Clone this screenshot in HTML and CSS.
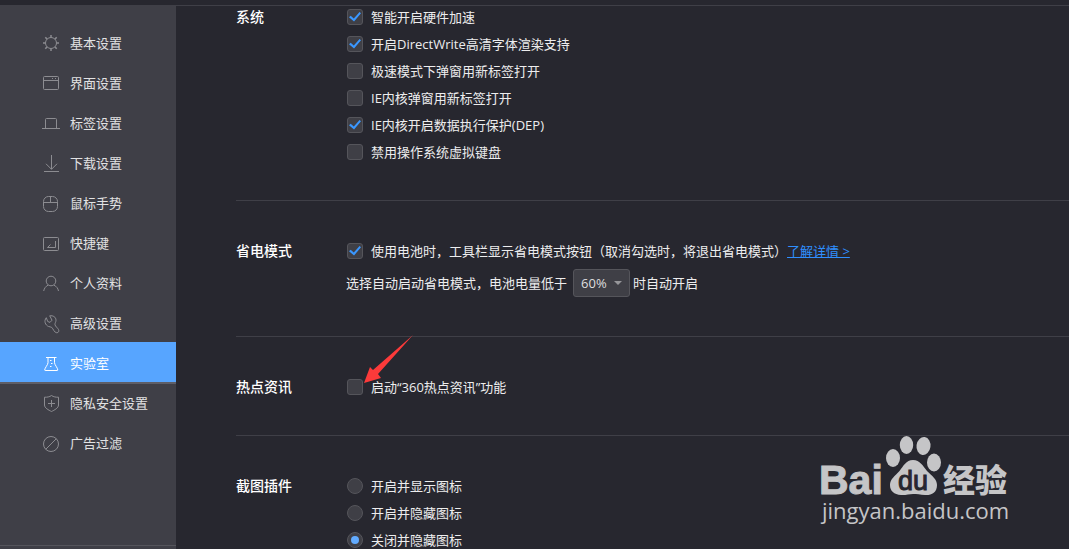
FILE: index.html
```html
<!DOCTYPE html>
<html lang="zh-CN">
<head>
<meta charset="utf-8">
<title>实验室</title>
<link rel="stylesheet" href="styles.css">
</head>
<body>
<div class="app">
  <nav class="sidebar">
    <div class="menu">
      <a class="item" href="#basic"><svg class="icon" viewBox="0 0 18 18"><circle cx="9" cy="9" r="5.5"/><path d="M9 1v2.500M9 14.500v2.500M1 9h2.500M14.500 9H17M3.300 3.300l1.800 1.800M12.900 12.900l1.800 1.800M3.300 14.700l1.800-1.800M12.900 5.100l1.800-1.800" stroke-width="1.500"/></svg>基本设置</a>
      <a class="item" href="#ui"><svg class="icon" viewBox="0 0 18 18"><rect x="1.500" y="2.500" width="15" height="13" rx="1"/><path d="M1.500 6.500h15M10 4.500h1M13 4.500h1"/></svg>界面设置</a>
      <a class="item" href="#tabs"><svg class="icon" viewBox="0 0 18 18"><path d="M0 14.500h18M3.500 14.500v-9a1 1 0 0 1 1-1h9a1 1 0 0 1 1 1v9"/></svg>标签设置</a>
      <a class="item" href="#download"><svg class="icon" viewBox="0 0 18 18"><path d="M9.500 1v14.300M4 9.800l5.500 5.500 5.500-5.500M2 17.500h15"/></svg>下载设置</a>
      <a class="item" href="#mouse"><svg class="icon" viewBox="0 0 18 18"><rect x="1.500" y="2.500" width="14" height="15" rx="5"/><path d="M1.500 8.500h14M8.500 2.500v6"/></svg>鼠标手势</a>
      <a class="item" href="#keys"><svg class="icon" viewBox="0 0 18 18"><rect x="1.500" y="3.500" width="15" height="13" rx="1"/><path d="M13.500 7v6.500h-8l3-3"/></svg>快捷键</a>
      <a class="item" href="#profile"><svg class="icon" viewBox="0 0 18 18"><circle cx="9" cy="7" r="4.800"/><path d="M1.700 17c.5-2.700 2-4.600 4.300-5.800M16.500 17c-.5-2.700-2-4.600-4.500-5.800"/></svg>个人资料</a>
      <a class="item" href="#advanced"><svg class="icon" viewBox="0 0 18 18"><path d="M7.700 1.800C11 1.300 14 3 14 6.300c0 1.700-1.300 3-1 4.500.5 1.700 2.500 3 3.500 4.700.8 1.700 0 3.300-1.700 3.300-2.500 0-3.500-4-5.100-5.400-.9-.7-2-.4-3.100-.9-3.300-1.300-5-5.500-2.300-8.800l1.400 3.800 2.300.9L10 6.200z"/></svg>高级设置</a>
      <a class="item active" href="#lab" aria-current="page"><svg class="icon" viewBox="0 0 18 18"><path d="M4 3.500h10.500M6 3.500v5.200c0 2-3.300 5.300-3.300 7.300 0 .3.200.5.500.5h12.100c.3 0 .5-.2.500-.5 0-2-3.300-5.300-3.300-7.300V3.500M8 6.500h1.500M9 9.500h1.500M8 12.500h1.500"/></svg>实验室</a>
      <a class="item" href="#privacy"><svg class="icon" viewBox="0 0 18 18"><path d="M9.500 1.500c-2 1.500-4.500 1.800-7 1.700V11c0 3 4 5 7 6.500 3-1.500 7-3.500 7-6.500V3.200c-2.500.1-5-.2-7-1.700zM9.500 6v7M6 9.500h7"/></svg>隐私安全设置</a>
      <a class="item" href="#adblock"><svg class="icon" viewBox="0 0 18 18"><circle cx="9" cy="10" r="7.500"/><path d="M3.700 15.300L14.300 4.700"/></svg>广告过滤</a>
    </div>
    <div class="foot"></div>
  </nav>
  <main class="main">
    <section class="section">
      <h2 class="title">系统</h2>
      <div class="options">
        <label class="row"><input class="box" type="checkbox" checked>智能开启硬件加速</label>
        <label class="row"><input class="box" type="checkbox" checked>开启DirectWrite高清字体渲染支持</label>
        <label class="row"><input class="box" type="checkbox">极速模式下弹窗用新标签打开</label>
        <label class="row"><input class="box" type="checkbox">IE内核弹窗用新标签打开</label>
        <label class="row"><input class="box" type="checkbox" checked>IE内核开启数据执行保护(DEP)</label>
        <label class="row"><input class="box" type="checkbox">禁用操作系统虚拟键盘</label>
      </div>
    </section>
    <section class="section">
      <h2 class="title">省电模式</h2>
      <div class="options">
        <div class="row"><label class="row"><input class="box" type="checkbox" checked>使用电池时，工具栏显示省电模式按钮（取消勾选时，将退出省电模式）</label><a class="more" href="#more">了解详情 &gt;</a></div>
        <div class="row tall">
          <label for="level">选择自动启动省电模式，电池电量低于</label>
          <span class="pick"><select class="select" id="level"><option>60%</option></select></span>
          <span>时自动开启</span>
        </div>
      </div>
    </section>
    <section class="section">
      <h2 class="title">热点资讯</h2>
      <div class="options">
        <label class="row"><input class="box" type="checkbox">启动“360热点资讯”功能</label>
      </div>
      <svg class="arrow" viewBox="0 0 50 50"><path d="M49 0L9 35 6 32 0 48 17 43 14 39z"/></svg>
    </section>
    <section class="section">
      <h2 class="title">截图插件</h2>
      <div class="options">
        <label class="row"><input class="box radio" type="radio" name="shot">开启并显示图标</label>
        <label class="row"><input class="box radio" type="radio" name="shot">开启并隐藏图标</label>
        <label class="row"><input class="box radio" type="radio" name="shot" checked>关闭并隐藏图标</label>
      </div>
    </section>
  </main>
</div>
<svg class="brand" viewBox="0 0 200 96">
  <text class="bai" x="-1" y="60">Bai</text>
  <g>
    <ellipse cx="73" cy="24" rx="7" ry="9"/>
    <ellipse cx="86.500" cy="11" rx="6.700" ry="9"/>
    <ellipse cx="103.500" cy="12" rx="7" ry="9" transform="rotate(8 103.500 12)"/>
    <ellipse cx="114" cy="28.500" rx="7" ry="9"/>
    <path d="M93 26c7 0 10 6 14 11 5 5 10 8 10 14 0 8-6 10.500-12 10-5-.5-8-1-12-1s-8 1.500-12 1c-7-.5-11-4-11-10 0-6 5-9 9.500-14C83.500 32 86 26 93 26z"/>
  </g>
  <text class="du" x="78" y="56">du</text>
  <text class="exp" x="123" y="58">经验</text>
  <text class="site" x="2" y="85">jingyan.baidu.com</text>
</svg>
</body>
</html>
```
FILE: styles.css
```css
* { box-sizing: border-box; }

body {
  margin: 0;
  background: #27272f;
  color: #ededee;
  font: 13px/21px "Open Sans", "Noto Sans CJK SC", sans-serif;
  overflow: hidden;
}

.app {
  display: flex;
  height: 100vh;
  padding-top: 5px;
}

.sidebar {
  display: flex;
  flex-direction: column;
  justify-content: space-between;
  flex: 0 0 176px;
  background: #3f3f47;
  padding-top: 17px;
}

.item {
  display: flex;
  align-items: center;
  gap: 10px;
  height: 40px;
  padding: 2px 0 0 42px;
  color: #e2e2e3;
  text-decoration: none;
}

.icon {
  width: 18px;
  height: 18px;
  overflow: visible;
  fill: none;
  stroke: #8c8c91;
  stroke-width: 1;
}

.active {
  background: #57a5ff;
  box-shadow: 0 2px 0 #5e5e67;
  color: #fff;
}

.active .icon { stroke: #fff; }

.foot {
  height: 4px;
  border-top: 1px solid #55555c;
}

.main {
  flex: 1;
  min-width: 0;
  border-top: 1px solid #3f3f47;
  padding-left: 60px;
  overflow: hidden;
}

.section {
  display: flex;
  position: relative;
  padding: 39px 0 37px;
  border-bottom: 1px solid #3f3f47;
}

.section:first-child { padding-top: 0; }

.title {
  flex: 0 0 110px;
  margin: 0;
  color: #fff;
  font-size: 14px;
  font-weight: 500;
  line-height: 22px;
}

.options {
  display: flex;
  flex-direction: column;
  gap: 5px;
}

.row {
  display: flex;
  align-items: center;
  height: 22px;
  white-space: nowrap;
}

.tall { height: 32px; }

.box {
  appearance: none;
  display: grid;
  place-items: center;
  width: 16px;
  height: 16px;
  margin: 0 8px 0 1px;
  border: 1px solid #55555b;
  border-radius: 3px;
  background: #3f3f46;
}

.box:checked::before {
  content: "";
  width: 12px;
  height: 10px;
  background: #3a97ff;
  clip-path: polygon(0 52%, 14% 38%, 40% 64%, 88% 0, 100% 12%, 42% 96%);
}

.radio { border-radius: 50%; }

.radio:checked::before {
  width: 8px;
  height: 8px;
  border-radius: 50%;
  background: #62abff;
  clip-path: none;
}

.more { color: #2f8fff; }

.pick {
  position: relative;
  display: flex;
  margin: 0 3px 0 6px;
}

.pick::after {
  content: "";
  position: absolute;
  right: 8px;
  top: 12px;
  border: 4px solid transparent;
  border-top-color: #96969a;
  border-bottom: 0;
  pointer-events: none;
}

.select {
  appearance: none;
  width: 57px;
  height: 28px;
  padding: 0 7px;
  border: 1px solid #55555b;
  border-radius: 3px;
  background: #3f3f46;
  color: #dededf;
  font: inherit;
}

.arrow {
  position: absolute;
  left: 128px;
  top: -2px;
  width: 50px;
  height: 50px;
  fill: #fc3a3a;
}

.brand {
  position: absolute;
  right: 49px;
  bottom: 19px;
  width: 200px;
  height: 96px;
  fill: #c5c5c7;
  overflow: visible;
}

.bai { font: bold 41px "Liberation Sans", sans-serif; stroke: #c5c5c7; }
.du { font: 27px "Liberation Sans", sans-serif; fill: #27272f; stroke: #27272f; }
.exp { font: 900 32px "Noto Sans CJK SC", sans-serif; }
.site { font: 500 22px "Open Sans", sans-serif; }
```
